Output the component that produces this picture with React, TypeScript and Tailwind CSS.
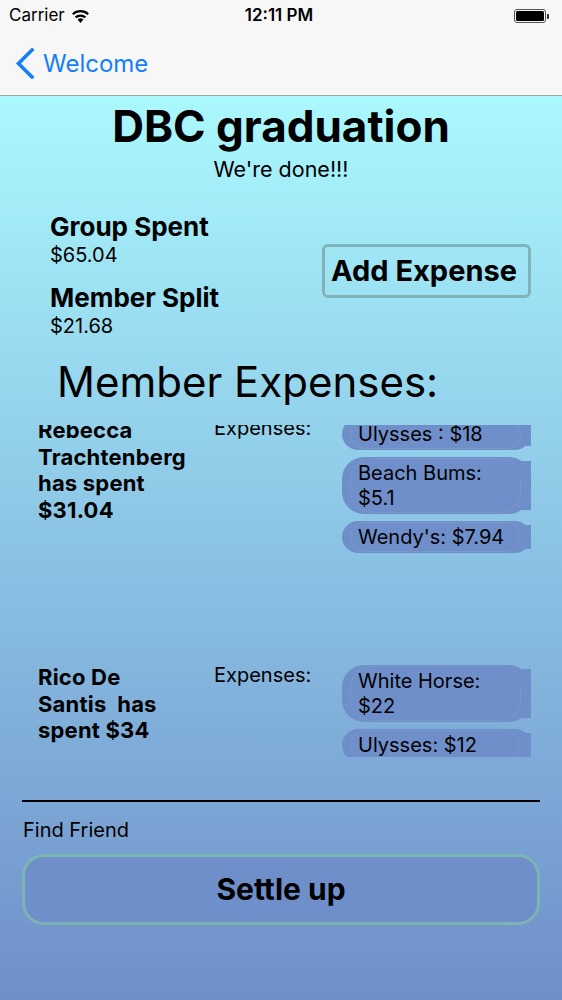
const members = [
  {
    name: ['Rebecca', 'Trachtenberg', 'has spent', '$31.04'],
    expenses: [['Ulysses : $18'], ['Beach Bums:', '$5.1'], ["Wendy's: $7.94"]],
  },
  {
    name: ['Rico De', 'Santis  has', 'spent $34'],
    expenses: [['White Horse:', '$22'], ['Ulysses: $12']],
  },
];

const StatusBar = () => (
  <div className="flex h-[32px] items-center justify-between pl-[9px] pr-[13px]">
    <div className="flex w-[120px] items-center gap-[6px] text-[17px] text-black">
      Carrier
      <svg width="19" height="14" viewBox="0 0 19 14">
        <path d="M9.5 14 L6.6 10.6 A4.4 4.4 0 0 1 12.4 10.6 Z" fill="#000" />
        <path d="M4.6 8.4 A7.4 7.4 0 0 1 14.4 8.4" stroke="#000" strokeWidth="2.2" fill="none" />
        <path d="M1.8 5.2 A11.4 11.4 0 0 1 17.2 5.2" stroke="#000" strokeWidth="2.2" fill="none" />
      </svg>
    </div>
    <div className="text-[17px] font-semibold text-black">12:11 PM</div>
    <div className="flex w-[120px] items-center justify-end">
      <div className="flex h-[14px] w-[32px] items-stretch rounded-[3px] border border-[#555] p-[1px]">
        <div className="flex-1 rounded-[1.5px] bg-black" />
      </div>
      <div className="ml-[1px] h-[5px] w-[2px] rounded-r-[1px] bg-[#333]" />
    </div>
  </div>
);

const ExpensePill = ({ lines }: { lines: string[] }) => (
  <div className="relative w-[189px] rounded-[22px] bg-[#6f8fca]">
    <div className="absolute top-[4px] bottom-[4px] right-0 w-[40px] bg-[#6f8fca]" />
    <div className="absolute inset-y-[1px] left-[8px] right-[10px] rounded-[22px] border border-[#7799c8]" />
    <div className="relative px-[16px] py-[3.5px] text-[20px] leading-[25px] text-black">
      {lines.map((line) => (
        <div key={line}>{line}</div>
      ))}
    </div>
  </div>
);

const MemberCard = ({ name, expenses }: { name: string[]; expenses: string[][] }) => (
  <div className="flex h-[247px] shrink-0 items-start pl-[38px]">
    <div className="mt-[2px] w-[176px] text-[22px] font-bold leading-[26.5px] tracking-[0.2px] text-black">
      {name.map((line) => (
        <div key={line} className="whitespace-pre">
          {line}
        </div>
      ))}
    </div>
    <div className="mt-[1px] w-[128px] text-[20px] leading-[24px] text-black">Expenses:</div>
    <div className="mt-[3px] flex flex-col gap-[7px]">
      {expenses.map((lines) => (
        <ExpensePill key={lines[0]} lines={lines} />
      ))}
    </div>
  </div>
);

const App = () => {
  return (
    <div className="flex h-[1000px] w-[562px] flex-col overflow-hidden font-['Inter',sans-serif]">
      <div className="h-[96px] shrink-0 border-b border-[#a6a6aa] bg-[#f7f7f7]">
        <StatusBar />
        <div className="flex h-[63px] items-center pl-[15px] text-[#157efb]">
          <svg width="20" height="31" viewBox="0 0 20 31" className="mr-[8px]">
            <path d="M17 2 L3.5 15.5 L17 29" stroke="#157efb" strokeWidth="3.6" fill="none" strokeLinecap="square" />
          </svg>
          <span className="text-[24px]">Welcome</span>
        </div>
      </div>

      <div className="flex flex-1 flex-col bg-gradient-to-b from-[#aaf9fe] to-[#6f8fc9]">
        <h1 className="pt-[6px] text-center text-[44px] font-bold leading-[48px] text-black">DBC graduation</h1>
        <p className="mt-[6px] text-center text-[21.5px] leading-[26px] text-black">We're done!!!</p>

        <div className="mt-[30px] flex items-start justify-between pl-[50px] pr-[31px]">
          <div className="text-black">
            <div className="text-[26px] font-bold leading-[30px]">Group Spent</div>
            <div className="text-[20px] leading-[26px]">$65.04</div>
            <div className="mt-[15px] text-[26px] font-bold leading-[30px]">Member Split</div>
            <div className="text-[20px] leading-[26px]">$21.68</div>
          </div>
          <button className="mt-[32px] h-[54px] w-[209px] rounded-[6px] border-[3px] border-[#7fb2ba] pl-[6px] text-left text-[29px] font-bold text-black">
            Add Expense
          </button>
        </div>

        <h2 className="mt-[18px] pl-[57px] text-[42px] leading-[50px] text-black">Member Expenses:</h2>

        <div className="mt-[18px] h-[332px] shrink-0 overflow-hidden">
          <div className="-mt-[10px]">
            {members.map((m) => (
              <MemberCard key={m.name[0]} name={m.name} expenses={m.expenses} />
            ))}
          </div>
        </div>

        <div className="mx-[22px] mt-[43px] h-[2px] shrink-0 bg-black" />
        <div className="mt-[16px] pl-[23px] text-[20px] leading-[24px] text-black">Find Friend</div>
        <button className="mx-[22px] mt-[12px] h-[71px] shrink-0 rounded-[22px] border-[3px] border-[#7bb5b3] bg-[#6f8fca] text-[30px] font-bold text-black">
          Settle up
        </button>
      </div>
    </div>
  );
};

export default App;
